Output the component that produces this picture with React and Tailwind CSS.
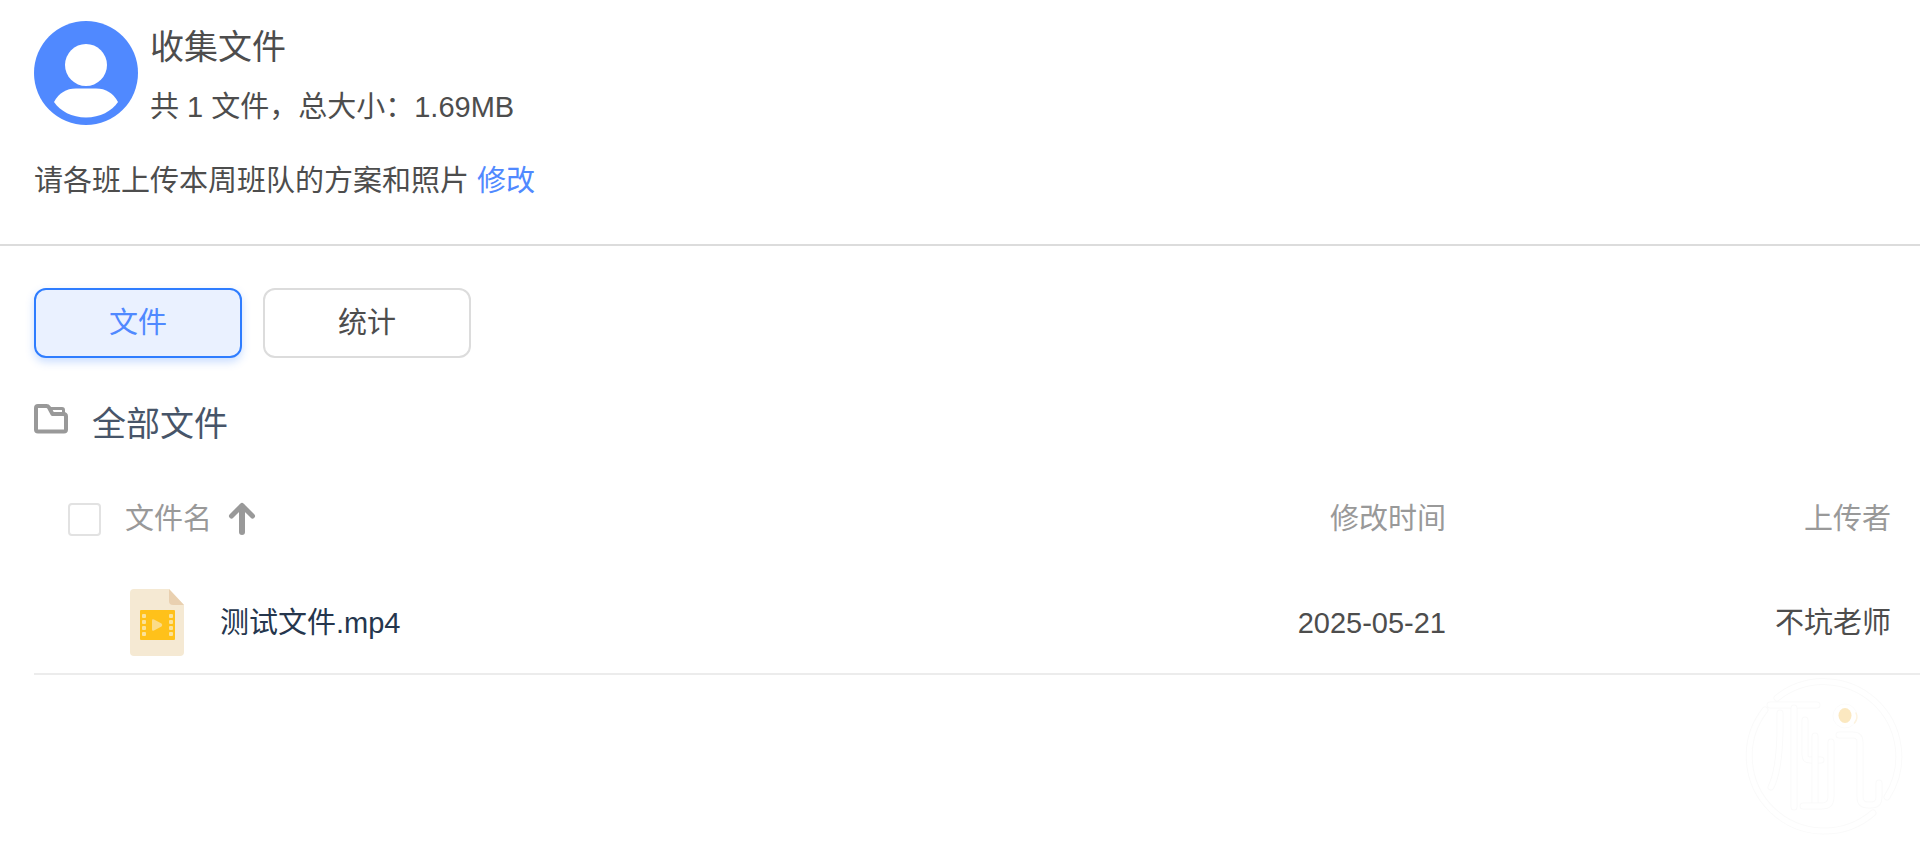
import { useState } from "react";
import clsx from "clsx";

const tabs = [
  { id: "files", label: "文件" },
  { id: "stats", label: "统计" },
];

const files = [
  { id: 1, name: "测试文件.mp4", date: "2025-05-21", author: "不坑老师" },
];

function Avatar() {
  return (
    <svg className="size-[104px] shrink-0" viewBox="0 0 104 104" aria-hidden="true">
      <circle cx="52" cy="52" r="52" fill="#5089ff" />
      <circle cx="52" cy="44" r="21" fill="#fff" />
      <path d="M20 81C25 72 32 67.500 42 67.500H62C72 67.500 79 72 84 81C78 90 66 96.500 52 96.500S26 90 20 81Z" fill="#fff" />
    </svg>
  );
}

function FolderIcon() {
  return (
    <svg className="h-[30px] w-[34px] shrink-0" viewBox="0 0 34 30" fill="none" stroke="#999" strokeLinejoin="round" aria-hidden="true">
      <path
        strokeWidth="4"
        d="M4 2H12.500Q14 2 15 3.500L18.500 10H29.500Q32 10 32 12.500V25.500Q32 27.500 30 27.500H4Q2 27.500 2 25.500V4Q2 2 4 2Z"
      />
      <path strokeWidth="3" d="M14.500 4.500H28Q29.500 4.500 29.500 6V11" />
    </svg>
  );
}

function SortIcon() {
  return (
    <svg className="h-[34px] w-[28px]" viewBox="0 0 28 34" fill="none" stroke="#999" strokeLinecap="round" strokeLinejoin="round" aria-hidden="true">
      <path strokeWidth="6" d="M14 5V30" />
      <path strokeWidth="5" d="M3.500 14L14 3.500L24.500 14" />
    </svg>
  );
}

function VideoIcon() {
  return (
    <svg className="h-[68px] w-[54px] shrink-0" viewBox="0 0 54 68" aria-hidden="true">
      <path d="M4 0H39L54 16V63Q54 67 50 67H4Q0 67 0 63V4Q0 0 4 0Z" fill="#f5e9d3" />
      <path d="M39 0L54 16H43Q39 16 39 12Z" fill="#e9d0b0" />
      <rect x="10" y="21" width="35" height="30" rx="1" fill="#ffc11a" />
      {[25, 31, 37, 43].map((y) => (
        <g key={y} fill="#fbe29a">
          <rect x="12" y={y} width="4" height="4" rx="1" />
          <rect x="39" y={y} width="4" height="4" rx="1" />
        </g>
      ))}
      <path d="M22 31.500Q22 29.500 24 30.500L31.500 34.500Q33 36 31.500 37.500L24 41.500Q22 42.500 22 40.500Z" fill="#fbdc8a" />
    </svg>
  );
}

const markLines = [
  "M33 22A75 75 0 0 1 143 121",
  "M129 137A75 75 0 0 1 21 34",
  "M26 29H73",
  "M50 32V131",
  "M36 37V57Q35 95 27 111",
  "M61 44V79Q61 84 66 84H77",
  "M71 60V129",
  "M87 66V121Q87 130 78 130H59",
  "M95 59H109Q116 59 116 66V121Q116 129 124 129H127Q135 129 135 121V107",
];

function Watermark() {
  return (
    <svg
      className="pointer-events-none fixed right-4 bottom-4 size-40"
      viewBox="0 0 160 160"
      fill="none"
      strokeLinecap="round"
      aria-hidden="true"
    >
      {markLines.map((d) => (
        <g key={d}>
          <path d={d} stroke="#fafafa" strokeWidth="7" />
          <path d={d} stroke="#fff" strokeWidth="5" />
        </g>
      ))}
      <circle cx="101" cy="40" r="12" stroke="#fbfbfb" />
      <ellipse cx="101" cy="39.500" rx="6.500" ry="7.500" fill="#fbe8c0" />
      <path d="M112 37Q114.500 42 110.500 47" stroke="#fdf3df" strokeWidth="1.500" />
    </svg>
  );
}

export default function App() {
  const [tab, setTab] = useState("files");

  return (
    <div className="min-h-screen overflow-x-hidden bg-white font-['Liberation_Sans','Noto_Sans_CJK_SC',sans-serif] text-[29px] leading-10 font-normal text-[#4d4d4d]">
      {/* Шапка */}
      <header className="border-b-2 border-[#dcdcdc] px-[34px] pt-[21px] pb-[43px]">
        <div className="flex gap-3">
          <Avatar />
          <div className="flex flex-col gap-3.5">
            <h1 className="text-[34px] leading-[52px] font-normal">收集文件</h1>
            <p>共 1 文件，总大小：1.69MB</p>
          </div>
        </div>
        <p className="mt-[34px]">
          请各班上传本周班队的方案和照片{" "}
          <a href="#edit" className="text-[#5089ff]">修改</a>
        </p>
      </header>

      <main className="pt-[42px] pl-[34px]">
        {/* Вкладки */}
        <div className="flex gap-[21px]">
          {tabs.map((item) => (
            <button
              key={item.id}
              type="button"
              onClick={() => setTab(item.id)}
              className={clsx(
                "h-[70px] w-[208px] rounded-xl border-2",
                tab === item.id
                  ? "border-[#2f7dff] bg-[#eaf1ff] text-[#5089ff] shadow-[0_4px_8px_rgba(47,125,255,0.25)]"
                  : "border-[#dcdcdc] bg-white"
              )}
            >
              {item.label}
            </button>
          ))}
        </div>

        <div className="mt-10 flex gap-6 text-[#475569]">
          <div className="pt-1.5">
            <FolderIcon />
          </div>
          <h2 className="text-[34px] leading-[52px] font-normal">全部文件</h2>
        </div>

        {/* Таблица файлов */}
        <table className="mt-5 w-full table-fixed">
          <thead>
            <tr className="h-[98px] text-[#999]">
              <th className="pl-[34px] text-left font-normal">
                <div className="flex items-center">
                  <input
                    type="checkbox"
                    aria-label="全选"
                    className="size-[33px] appearance-none rounded-sm border-2 border-[#e2e2e2] checked:bg-[#5089ff]"
                  />
                  <button type="button" className="ml-6 flex items-center gap-4">
                    文件名
                    <SortIcon />
                  </button>
                </div>
              </th>
              <th className="w-[300px] text-right font-normal">修改时间</th>
              <th className="w-[474px] pr-[29px] text-right font-normal">上传者</th>
            </tr>
          </thead>
          <tbody>
            {files.map((file) => (
              <tr key={file.id} className="h-[106px] border-b-2 border-[#ececec]">
                <td className="pt-1 pl-24">
                  <div className="flex items-center gap-9">
                    <VideoIcon />
                    <span className="text-[#25364d]">{file.name}</span>
                  </div>
                </td>
                <td className="pt-1 text-right">{file.date}</td>
                <td className="pt-1 pr-[29px] text-right">{file.author}</td>
              </tr>
            ))}
          </tbody>
        </table>
      </main>

      <Watermark />
    </div>
  );
}
